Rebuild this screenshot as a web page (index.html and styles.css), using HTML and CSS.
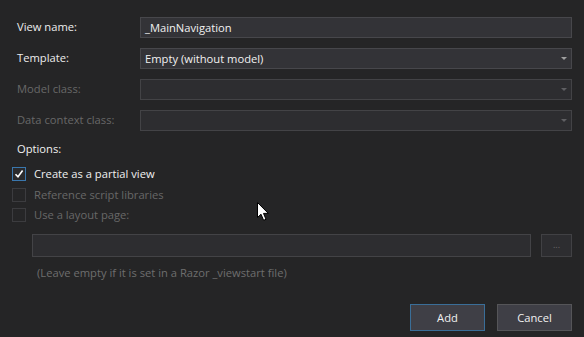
FILE: index.html
```html
<!DOCTYPE html>
<html>
<head>
<meta charset="utf-8">
<link rel="stylesheet" href="styles.css">
</head>
<body>
<div class="dialog">
  <div class="form-grid">
    <label class="lbl">View name:</label>
    <div class="field"><span class="val">_MainNavigation</span></div>
    <label class="lbl">Template:</label>
    <div class="field combo"><span class="val">Empty (without model)</span><span class="arrow"></span></div>
    <label class="lbl disabled">Model class:</label>
    <div class="field combo off"><span class="val"></span><span class="arrow dim"></span></div>
    <label class="lbl disabled">Data context class:</label>
    <div class="field combo off"><span class="val"></span><span class="arrow dim"></span></div>
  </div>

  <div class="options-title">Options:</div>
  <div class="checks">
    <div class="check-row">
      <span class="box checked">
        <svg width="10" height="10" viewBox="0 0 10 10"><path d="M1.5 5.2 L4 7.8 L8.6 1.6" fill="none" stroke="#ffffff" stroke-width="1.6"/></svg>
      </span>
      <span class="check-text">Create as a partial view</span>
    </div>
    <div class="check-row">
      <span class="box"></span>
      <span class="check-text disabled">Reference script libraries</span>
    </div>
    <div class="check-row">
      <span class="box"></span>
      <span class="check-text disabled">Use a layout page:</span>
    </div>
  </div>

  <div class="layout-row">
    <div class="field layout-field off"></div>
    <div class="browse">...</div>
  </div>
  <div class="hint">(Leave empty if it is set in a Razor _viewstart file)</div>

  <div class="buttons">
    <div class="btn primary">Add</div>
    <div class="btn">Cancel</div>
  </div>

  <svg class="cursor" width="14" height="20" viewBox="0 0 14 20">
    <path d="M0.5 0.5 L0.5 15.5 L4 12.2 L6.6 18.3 L9 17.3 L6.5 11.4 L11.3 11.4 Z" fill="#ffffff" stroke="#000000" stroke-width="1"/>
  </svg>
</div>
</body>
</html>
```

FILE: styles.css
```css
html, body {
  margin: 0;
  padding: 0;
  background: #252526;
}
body {
  font-family: "Open Sans", "Noto Sans", "DejaVu Sans", sans-serif;
  font-size: 11.2px;
  color: #f1f1f1;
  width: 584px;
  height: 337px;
  overflow: hidden;
}
.dialog {
  position: relative;
  padding: 17px 12px 0 12px;
  height: 337px;
  box-sizing: border-box;
}
.form-grid {
  display: grid;
  grid-template-columns: 128px 1fr;
  grid-auto-rows: 21px;
  row-gap: 10px;
}
.lbl {
  padding-left: 5px;
  display: flex;
  align-items: center;
  margin-top: -3px;
  color: #ececec;
}
.lbl.disabled, .check-text.disabled { color: #686868; }
.field {
  box-sizing: border-box;
  background: #333337;
  border: 1px solid #47474b;
  display: flex;
  align-items: center;
  padding-left: 4px;
}
.field.off { background: #2d2d30; border-color: #434346; }
.field .val { flex: 1; color: #f1f1f1; }
.arrow {
  width: 0; height: 0;
  border-left: 3.5px solid transparent;
  border-right: 3.5px solid transparent;
  border-top: 3.5px solid #a0a0a0;
  margin-right: 4px;
}
.arrow.dim { border-top-color: #5f5f62; }
.options-title {
  margin-top: 9px;
  padding-left: 5px;
  height: 17px;
  line-height: 17px;
}
.checks {
  margin-top: 10px;
  display: flex;
  flex-direction: column;
}
.check-row {
  height: 20.5px;
  display: flex;
  align-items: flex-start;
  gap: 8px;
}
.box {
  box-sizing: border-box;
  width: 14px;
  height: 14px;
  border: 1px solid #3c3c3f;
  background: #262627;
  display: flex;
  align-items: center;
  justify-content: center;
}
.box.checked { border-color: #3a77ad; background: #2a2a2c; }
.check-text { line-height: 14px; }
.layout-row {
  display: flex;
  gap: 10px;
  margin-top: 5.5px;
  padding-left: 20px;
  height: 23px;
}
.layout-field { flex: 1; }
.browse {
  box-sizing: border-box;
  width: 31px;
  border: 1px solid #414144;
  background: #2d2d30;
  color: #6a6a6a;
  font-size: 9px;
  display: flex;
  align-items: center;
  justify-content: center;
  padding-bottom: 2px;
}
.hint {
  margin-top: 8px;
  padding-left: 25px;
  color: #6e6e6e;
  line-height: 16px;
}
.buttons {
  display: flex;
  justify-content: flex-end;
  gap: 12px;
  margin-top: 23px;
}
.btn {
  box-sizing: border-box;
  width: 75px;
  height: 27px;
  background: #3f3f46;
  border: 1px solid #555558;
  display: flex;
  align-items: center;
  justify-content: center;
  color: #f1f1f1;
}
.btn.primary { border-color: #3a6e98; }
.cursor {
  position: absolute;
  left: 257px;
  top: 202px;
}
```
